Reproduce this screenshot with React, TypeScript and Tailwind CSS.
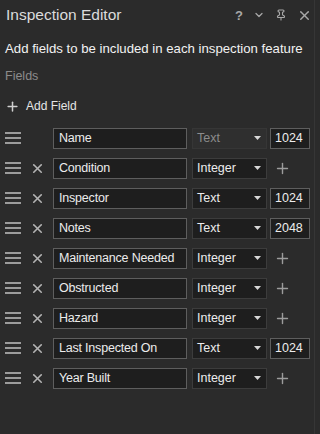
import { X, Plus, ChevronDown, Pin } from "lucide-react";

type Field = {
  name: string;
  type: "Text" | "Integer";
  length?: string;
  locked?: boolean;
};

const fields: Field[] = [
  { name: "Name", type: "Text", length: "1024", locked: true },
  { name: "Condition", type: "Integer" },
  { name: "Inspector", type: "Text", length: "1024" },
  { name: "Notes", type: "Text", length: "2048" },
  { name: "Maintenance Needed", type: "Integer" },
  { name: "Obstructed", type: "Integer" },
  { name: "Hazard", type: "Integer" },
  { name: "Last Inspected On", type: "Text", length: "1024" },
  { name: "Year Built", type: "Integer" },
];

function DragHandle() {
  return (
    <svg width="16" height="12" viewBox="0 0 16 12" className="text-[#9c9c9c]">
      <rect x="0" y="0" width="16" height="2" fill="currentColor" />
      <rect x="0" y="5" width="16" height="2" fill="currentColor" />
      <rect x="0" y="10" width="16" height="2" fill="currentColor" />
    </svg>
  );
}

function Caret() {
  return (
    <svg width="7" height="4" viewBox="0 0 7 4">
      <path d="M0 0 L7 0 L3.5 4 Z" fill="#d8d8d8" />
    </svg>
  );
}

function FieldRow({ field }: { field: Field }) {
  return (
    <div className="flex items-center h-[30px] whitespace-nowrap text-[12.5px]">
      <div className="w-[16px] ml-[5px] flex items-center">
        <DragHandle />
      </div>
      <div className="w-[32px] flex justify-center">
        {!field.locked && <X size={15} strokeWidth={2.6} className="text-[#b4b4b4]" />}
      </div>
      <div className="w-[134px] h-[21px] border border-[#5e5e5e] bg-[#1e1e1e] flex items-center pl-[5px] text-[#ececec] tracking-[-0.2px]">
        {field.name}
      </div>
      <div
        className={
          field.locked
            ? "ml-[5px] w-[75px] h-[21px] border border-[#363636] bg-[#2f2f2f] flex items-center justify-between pl-[4px] pr-[5px] text-[#8c8c8c]"
            : "ml-[5px] w-[75px] h-[21px] border border-[#3c3c3c] bg-[#1e1e1e] flex items-center justify-between pl-[4px] pr-[5px] text-[#ececec]"
        }
      >
        <span>{field.type}</span>
        <Caret />
      </div>
      {field.length ? (
        <div className="ml-[3px] w-[40px] h-[21px] border border-[#5e5e5e] bg-[#1e1e1e] flex items-center pl-[4px] text-[#ececec]">
          {field.length}
        </div>
      ) : (
        <div className="ml-[3px] w-[40px] flex justify-start pl-[4px]">
          <Plus size={17} strokeWidth={2} className="text-[#9c9c9c]" />
        </div>
      )}
    </div>
  );
}

export default function App() {
  return (
    <div
      className="w-[320px] h-[434px] bg-[#2b2b2b] text-[#e6e6e6] overflow-hidden flex"
      style={{ fontFamily: '"Liberation Sans", Arial, sans-serif' }}
    >
      <div className="flex-1 flex flex-col">
        <div className="flex items-center justify-between h-[30px] pl-[6px] pr-[2px]">
          <span className="text-[15.5px] text-[#dcdcdc]">Inspection Editor</span>
          <div className="flex items-center gap-[10px] text-[#a8a8a8]">
            <span className="text-[13px] font-bold leading-none">?</span>
            <ChevronDown size={12} strokeWidth={2.5} />
            <Pin size={12} strokeWidth={2.2} />
            <X size={15} strokeWidth={2.2} />
          </div>
        </div>
        <div className="pl-[5px] mt-[10px] text-[13.2px] text-[#f2f2f2] leading-[18px] whitespace-nowrap">
          Add fields to be included in each inspection feature
        </div>
        <div className="pl-[5px] mt-[9px] text-[12.5px] text-[#8c8c8c] leading-[18px]">Fields</div>
        <div className="flex items-center pl-[5px] mt-[11px] h-[20px]">
          <Plus size={15} strokeWidth={2.4} className="text-[#d0d0d0]" />
          <span className="ml-[6px] text-[12px] text-[#e6e6e6]">Add Field</span>
        </div>
        <div className="mt-[7px] flex flex-col">
          {fields.map((f) => (
            <FieldRow key={f.name} field={f} />
          ))}
        </div>
      </div>
      <div className="w-[6px] border-l border-[#363636] bg-[#2b2b2b]" />
    </div>
  );
}
